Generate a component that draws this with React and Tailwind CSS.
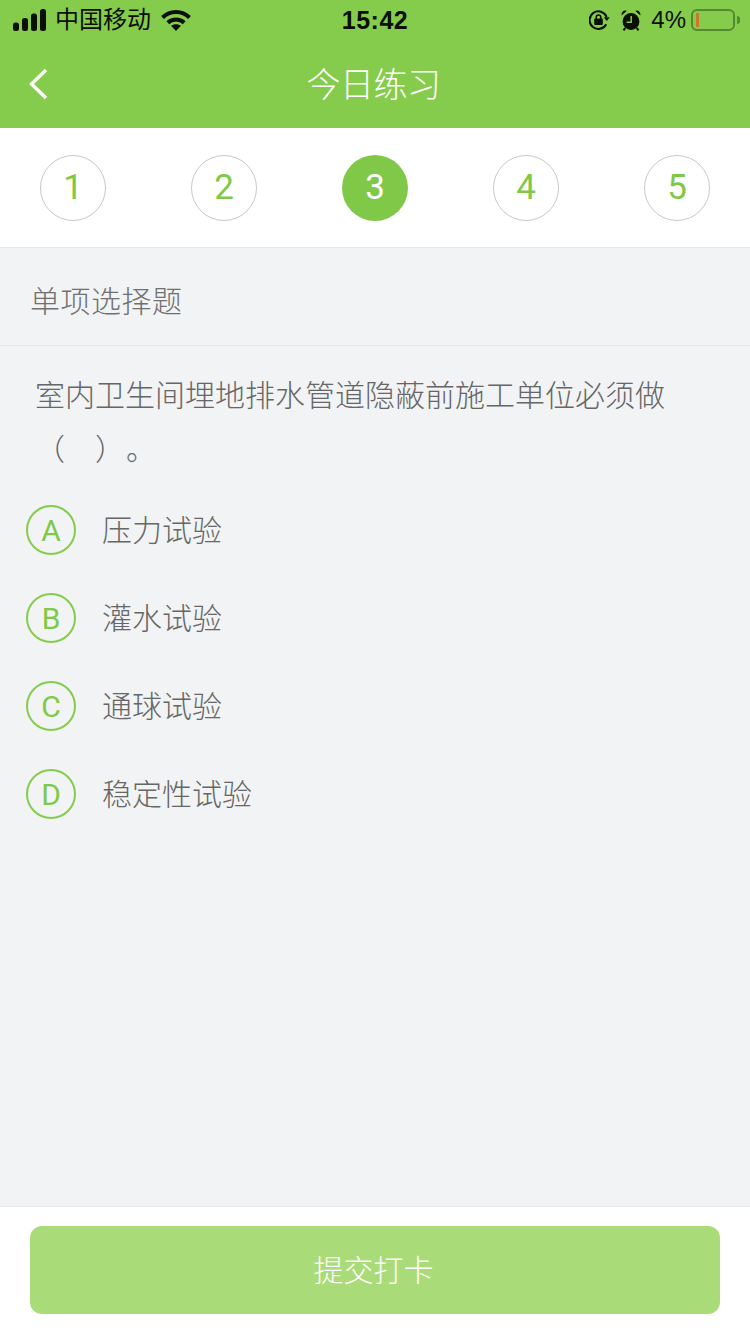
const FONT = "font-['Liberation_Sans','Noto_Sans_CJK_SC',sans-serif]";
const NUM_FONT = "font-['Roboto','Liberation_Sans',sans-serif]";

const steps = [1, 2, 3, 4, 5];
const current = 3;

const options = [
  { key: "A", text: "压力试验" },
  { key: "B", text: "灌水试验" },
  { key: "C", text: "通球试验" },
  { key: "D", text: "稳定性试验" },
];

function SignalBars() {
  return (
    <svg width="33" height="22" viewBox="0 0 33 22" fill="#0b0f06">
      <rect x="0" y="13.5" width="6" height="8.5" rx="2.5" />
      <rect x="9" y="9" width="6" height="13" rx="2.5" />
      <rect x="18" y="4.5" width="6" height="17.5" rx="2.5" />
      <rect x="27" y="0" width="6" height="22" rx="2.5" />
    </svg>
  );
}

function Wifi() {
  return (
    <svg width="30" height="22" viewBox="0 0 30 22" fill="none" stroke="#0b0f06" strokeWidth="4">
      <path d="M1.5 8.5C9 1.2 21 1.2 28.5 8.5" />
      <path d="M6.8 13.8c4.6-4.3 11.8-4.3 16.4 0" />
      <path d="M15 22l-5-5.2c2.8-2.2 7.2-2.2 10 0z" fill="#0b0f06" stroke="none" />
    </svg>
  );
}

function RotationLock() {
  return (
    <svg width="21" height="20" viewBox="0 0 21 20" fill="none">
      <path d="M17.2 14.2A8.8 8.8 0 1 1 17.6 7" stroke="#0b0f06" strokeWidth="2" />
      <path d="M14.8 7.2h6l-3 3.8z" fill="#0b0f06" />
      <rect x="5.2" y="8.6" width="8.6" height="6.4" rx="1" fill="#0b0f06" />
      <path d="M7.2 9V7.2a2.3 2.3 0 0 1 4.6 0V9" stroke="#0b0f06" strokeWidth="1.5" />
    </svg>
  );
}

function Alarm() {
  return (
    <svg width="20" height="21" viewBox="0 0 20 21">
      <circle cx="10" cy="11.5" r="8.4" fill="#0b0f06" />
      <path d="M.6 5.6 5.6 1C3 -.4.2 2 .6 5.6zM19.4 5.6 14.4 1c2.6-1.4 5.4 1 5 4.6z" fill="#0b0f06" />
      <path d="M4.2 18l-1.7 2.4M15.8 18l1.7 2.4" stroke="#0b0f06" strokeWidth="2" />
      <path d="M10.2 6v6.2H5.6" fill="none" stroke="#86cc4c" strokeWidth="1.5" />
    </svg>
  );
}

function Battery() {
  return (
    <div className="flex items-center gap-[2px]">
      <div className="w-[44px] h-[22px] rounded-[6px] border-2 border-[#55892f] px-[3px] py-[2px]">
        <div className="w-[3px] h-full bg-[#d0772f]" />
      </div>
      <div className="w-[3px] h-[8px] rounded-r-full bg-[#55892f]" />
    </div>
  );
}

function StatusBar() {
  return (
    <div className="relative h-[40px] flex items-center justify-between pl-[13px] pr-[10px] text-[#0b0f06]">
      <div className="flex items-center">
        <SignalBars />
        <span className="ml-[9px] text-[24px] leading-none">中国移动</span>
        <span className="ml-[10px]">
          <Wifi />
        </span>
      </div>
      <span className="absolute left-0 right-0 text-center text-[25px] font-bold leading-none tracking-[0.5px]">15:42</span>
      <div className="flex items-center">
        <RotationLock />
        <span className="ml-[11px]">
          <Alarm />
        </span>
        <span className="ml-[10px] mr-[5px] text-[24px] leading-none">4%</span>
        <Battery />
      </div>
    </div>
  );
}

function NavBar() {
  return (
    <div className="relative h-[88px] flex items-center justify-center">
      <svg className="absolute left-[28px] top-[28px]" width="20" height="32" viewBox="0 0 20 32" fill="none" stroke="#fff" strokeWidth="3.4">
        <path d="M18 2 3.5 16 18 30" />
      </svg>
      <h1 className="text-[34px] font-light text-white leading-none mt-[2px] pr-[3px] tracking-[-0.5px]">今日练习</h1>
    </div>
  );
}

function Stepper() {
  return (
    <div className={`${NUM_FONT} h-[120px] bg-white border-b border-[#e6e7e9] px-[40px] pt-[27px] flex justify-between items-start`}>
      {steps.map((n) =>
        n === current ? (
          <div key={n} className="w-[66px] h-[66px] rounded-full bg-[#80c948] text-white text-[35px] pt-[1px] flex items-center justify-center">
            {n}
          </div>
        ) : (
          <div key={n} className="w-[66px] h-[66px] rounded-full border border-[#c8c8c8] text-[#80c948] text-[35px] pt-[1px] flex items-center justify-center">
            {n}
          </div>
        )
      )}
    </div>
  );
}

export default function App() {
  return (
    <div className={`${FONT} w-[750px] h-[1334px] flex flex-col bg-[#f1f3f5] overflow-hidden`}>
      <header className="bg-[#86cc4c]">
        <StatusBar />
        <NavBar />
      </header>

      <Stepper />

      {/* 题型 */}
      <div className="h-[98px] border-b border-[#e6e7e9] pl-[30px] pt-[10px] flex items-center text-[30px] font-light tracking-[0.5px] text-[#707070]">
        单项选择题
      </div>

      {/* 题干 + 选项 */}
      <div className="flex-1">
        <p className="pl-[35px] pr-[80px] pt-[23px] text-[30px] font-light leading-[54px] text-[#666]">
          室内卫生间埋地排水管道隐蔽前施工单位必须做
          <br />
          （　）<span className="ml-[16px]">。</span>
        </p>
        <ul className="mt-[9px] pl-[26px]">
          {options.map((o) => (
            <li key={o.key} className="h-[88px] flex items-center">
              <div className={`${NUM_FONT} w-[50px] h-[50px] rounded-full border-2 border-[#86cc4c] text-[#80c948] text-[30px] flex items-center justify-center`}>
                {o.key}
              </div>
              <span className="ml-[26px] text-[30px] font-light text-[#666]">{o.text}</span>
            </li>
          ))}
        </ul>
      </div>

      <footer className="h-[128px] bg-white border-t border-[#e6e7e9] pt-[19px] px-[30px]">
        <button className="w-full h-[88px] rounded-[12px] bg-[#a9dc79] text-white text-[30px] font-light pr-[3px]">
          提交打卡
        </button>
      </footer>
    </div>
  );
}
